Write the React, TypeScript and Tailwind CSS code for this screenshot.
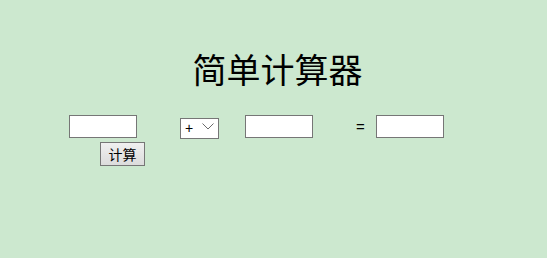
import React, { useState } from 'react';

export default function App() {
  const [a, setA] = useState('');
  const [b, setB] = useState('');
  const [op, setOp] = useState('+');
  const [result, setResult] = useState('');

  const calculate = () => {
    const x = parseFloat(a);
    const y = parseFloat(b);
    if (isNaN(x) || isNaN(y)) return;
    let r = 0;
    if (op === '+') r = x + y;
    if (op === '-') r = x - y;
    if (op === '*') r = x * y;
    if (op === '/') r = x / y;
    setResult(String(r));
  };

  const inputClass =
    'w-[68px] h-[23px] bg-white border border-[#767676] px-1 text-[13px] outline-none';

  return (
    <div
      className="min-h-screen w-full bg-[#cce8cf] text-black"
      style={{ fontFamily: '"Liberation Sans", "Noto Sans CJK SC", sans-serif' }}
    >
      {/* Title */}
      <div className="flex justify-center pt-[49px] pl-[8px]">
        <h1
          className="text-[34px] leading-[40px] font-normal"
          style={{ fontFamily: '"Noto Sans CJK SC", serif' }}
        >
          简单计算器
        </h1>
      </div>

      {/* Calculator row */}
      <div className="flex items-center pl-[69px] mt-[26px]">
        <input className={inputClass} value={a} onChange={(e) => setA(e.target.value)} />

        <div className="relative ml-[43px] w-[39px] h-[21px]">
          <select
            value={op}
            onChange={(e) => setOp(e.target.value)}
            className="appearance-none w-full h-full bg-white border border-[#767676] pl-[4px] text-[14px] text-black leading-none outline-none"
          >
            <option value="+">+</option>
            <option value="-">-</option>
            <option value="*">*</option>
            <option value="/">/</option>
          </select>
          <svg
            className="absolute right-[5px] top-[7px] pointer-events-none"
            width="12"
            height="7"
            viewBox="0 0 12 7"
            fill="none"
          >
            <path d="M0.5 0.5 L6 6 L11.5 0.5" stroke="#6b6b6b" strokeWidth="1" />
          </svg>
        </div>

        <input className={`${inputClass} ml-[26px]`} value={b} onChange={(e) => setB(e.target.value)} />

        <span className="ml-[43px] w-[10px] text-[15px] leading-none">=</span>

        <input className={`${inputClass} ml-[10px]`} value={result} readOnly />
      </div>

      <div className="pl-[100px] mt-[4px]">
        <button
          onClick={calculate}
          className="w-[45px] h-[24px] border border-[#767676] bg-gradient-to-b from-[#f0f0f0] to-[#dcdcdc] text-[14px] leading-none"
          style={{ fontFamily: '"Noto Sans CJK SC", sans-serif' }}
        >
          计算
        </button>
      </div>
    </div>
  );
}
